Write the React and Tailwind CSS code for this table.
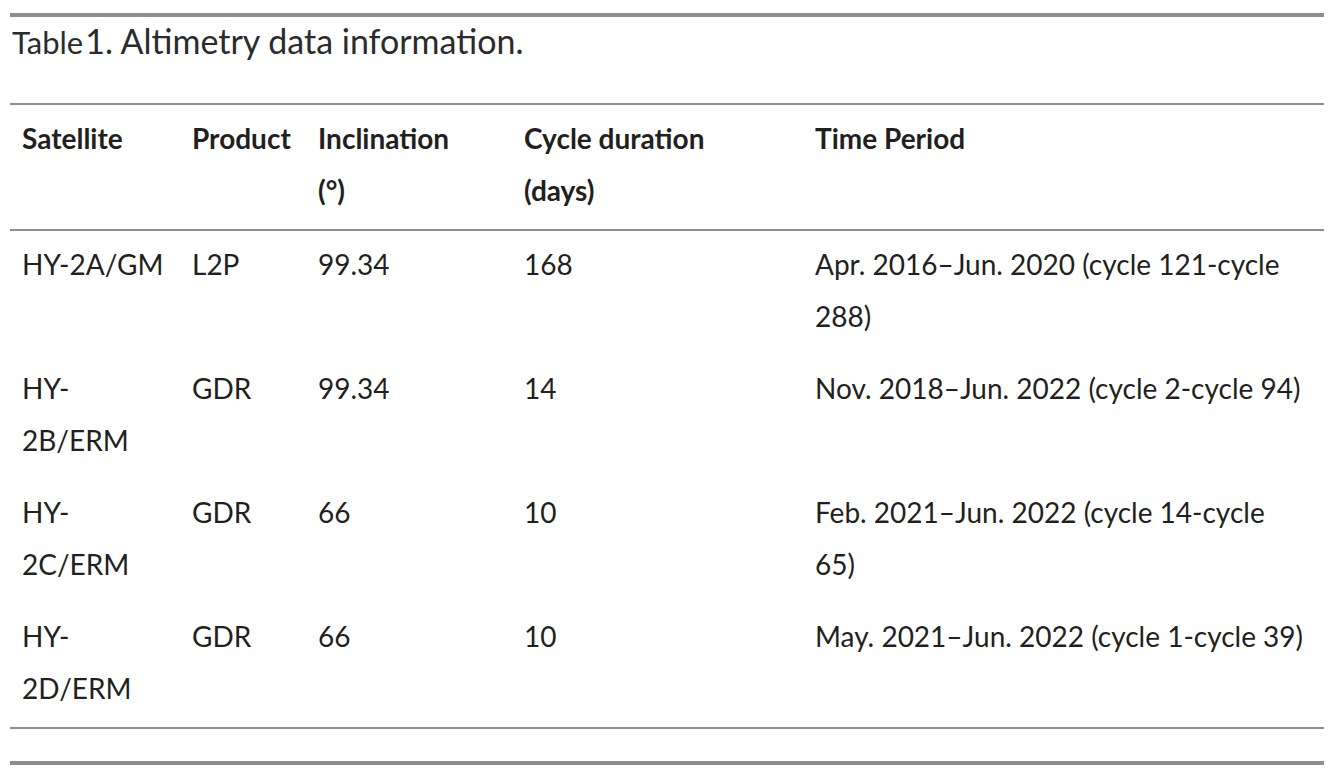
const rows = [
  [["HY-2A/GM"], ["L2P"], ["99.34"], ["168"], ["Apr. 2016–Jun. 2020 (cycle 121-cycle", "288)"]],
  [["HY-", "2B/ERM"], ["GDR"], ["99.34"], ["14"], ["Nov. 2018–Jun. 2022 (cycle 2-cycle 94)"]],
  [["HY-", "2C/ERM"], ["GDR"], ["66"], ["10"], ["Feb. 2021–Jun. 2022 (cycle 14-cycle", "65)"]],
  [["HY-", "2D/ERM"], ["GDR"], ["66"], ["10"], ["May. 2021–Jun. 2022 (cycle 1-cycle 39)"]],
];

const heads = [["Satellite"], ["Product"], ["Inclination", "(°)"], ["Cycle duration", "(days)"], ["Time Period"]];

const Lines = ({ lines }) =>
  lines.map((l, k) => (
    <span key={k} className="block whitespace-nowrap">
      {l}
    </span>
  ));

const App = () => {
  return (
    <div className="w-[1334px] h-[780px] bg-white pt-[13px] px-[10px] text-[#231f20] font-['Lato',sans-serif]">
      <div className="border-t-4 border-[#8e8e8e]">
        <p className="pt-[6px] pb-[43px] pl-[2px] leading-[36px] text-[34px] text-[#2b2b2b] whitespace-nowrap">
          <span className="text-[31px]">Table</span>
          <span className="ml-[2px]">1</span>. Altimetry data information.
        </p>
      </div>
      <table className="w-full table-fixed border-collapse text-[28px]">
        <colgroup>
          <col className="w-[170px]" />
          <col className="w-[126px]" />
          <col className="w-[206px]" />
          <col className="w-[291px]" />
          <col />
        </colgroup>
        <thead>
          <tr className="border-t-2 border-b-2 border-[#8e8e8e]">
            {heads.map((h, j) => (
              <th key={j} className="text-left align-top font-bold px-[12px] pt-[7px] pb-[13px] h-[124px] leading-[52px]">
                <Lines lines={h} />
              </th>
            ))}
          </tr>
        </thead>
        <tbody>
          {rows.map((r, i) => (
            <tr key={i} className={i === rows.length - 1 ? "border-b-2 border-[#8e8e8e]" : ""}>
              {r.map((c, j) => (
                <td key={j} className="align-top px-[12px] pt-[7px] pb-[13px] h-[124px] leading-[52px]">
                  <Lines lines={c} />
                </td>
              ))}
            </tr>
          ))}
        </tbody>
      </table>
      <div className="mt-[32px] border-t-4 border-[#8e8e8e]"></div>
    </div>
  );
};

export default App;
